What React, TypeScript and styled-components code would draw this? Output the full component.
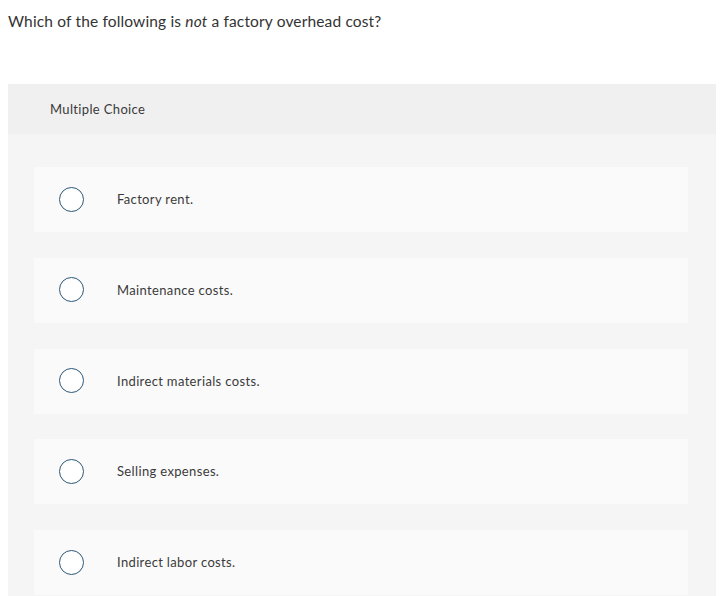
import styled, { createGlobalStyle } from "styled-components";

const GlobalStyle = createGlobalStyle`
  body {
    margin: 0;
    background: #ffffff;
    font-family: "Lato", "Liberation Sans", sans-serif;
    color: #333333;
  }
`;

const Page = styled.div`
  padding: 11px 4px 0 8px;
`;

const Question = styled.p`
  margin: 0;
  font-size: 15.5px;
  line-height: 20px;
  color: #333333;
  letter-spacing: 0.15px;
  em {
    font-style: italic;
  }
`;

const Panel = styled.div`
  margin-top: 53px;
  background: #f5f5f5;
  padding-bottom: 20px;
`;

const PanelHeader = styled.div`
  background: #f0f0f0;
  height: 50px;
  padding-left: 42px;
  display: flex;
  align-items: center;
  font-size: 13px;
  letter-spacing: 0.35px;
  color: #3a3a3a;
`;

const Options = styled.div`
  display: flex;
  flex-direction: column;
  gap: 25.75px;
  padding: 33px 28px 0 26px;
`;

const Option = styled.label`
  height: 65px;
  background: #fafafa;
  display: flex;
  align-items: center;
  padding-left: 25px;
  cursor: pointer;
`;

const Radio = styled.span`
  width: 23px;
  height: 23px;
  margin-top: -1px;
  border: 1.5px solid #2c5877;
  border-radius: 50%;
  background: #ffffff;
  flex-shrink: 0;
`;

const OptionText = styled.span`
  margin-left: 33px;
  margin-top: -1px;
  font-size: 13px;
  letter-spacing: 0.35px;
  color: #3a3a3a;
`;

const choices = [
  "Factory rent.",
  "Maintenance costs.",
  "Indirect materials costs.",
  "Selling expenses.",
  "Indirect labor costs.",
];

export default function App() {
  return (
    <>
      <GlobalStyle />
      <Page>
        <Question>
          Which of the following is <em>not</em> a factory overhead cost?
        </Question>
        <Panel>
          <PanelHeader>Multiple Choice</PanelHeader>
          <Options>
            {choices.map((c) => (
              <Option key={c}>
                <Radio />
                <OptionText>{c}</OptionText>
              </Option>
            ))}
          </Options>
        </Panel>
      </Page>
    </>
  );
}
